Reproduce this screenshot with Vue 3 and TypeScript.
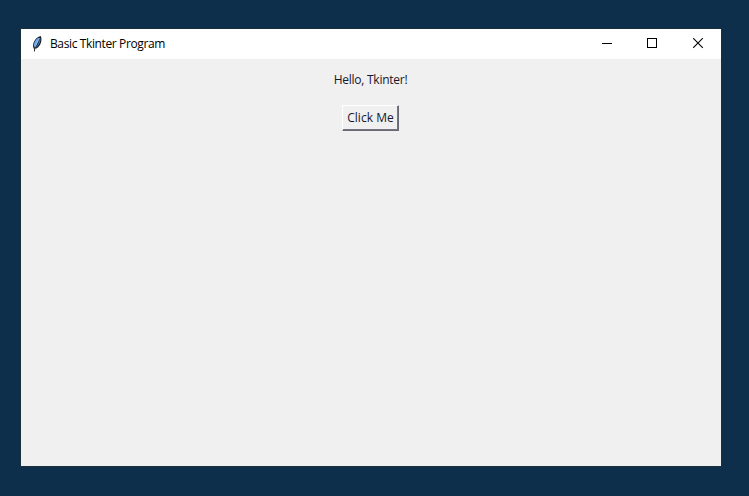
<script setup lang="ts">
import { ref } from 'vue'

const title = 'Basic Tkinter Program'
const message = ref<string>('Hello, Tkinter!')
</script>

<template>
  <main class="desktop">
    <section class="window">
      <header class="titlebar">
        <svg class="feather" width="12" height="18" viewBox="0 0 12 18" aria-hidden="true">
          <path d="M2.6 13.4C.9 9 3.6 2.8 9.8 1C11.4 4.6 9.9 11 5.4 13.6Z" fill="#15191f" />
          <path d="M3 11.4C2.4 8 4.6 3.8 8.2 2.4C8.2 6 6.3 9 3.8 12.4Z" fill="#6aa6ee" />
          <path d="M4.8 12.4C7 10 8.6 6.5 9.2 2.6C10 6 8.6 10 5.4 12.6Z" fill="#4a80c4" />
          <path d="M8.8 3C6.6 6.5 5 9.6 3.8 13" fill="none" stroke="#b5d2f2" stroke-width=".6" />
          <path d="M4 11.6L3.4 16.4" fill="none" stroke="#222" stroke-width="1" />
        </svg>
        <span class="title">{{ title }}</span>
        <nav class="controls">
          <button class="control minimize" aria-label="Minimize">
            <svg width="11" height="11" shape-rendering="crispEdges"><path d="M0 5.5H10" stroke="#000" /></svg>
          </button>
          <button class="control" aria-label="Maximize">
            <svg width="11" height="11" shape-rendering="crispEdges"><rect x=".5" y=".5" width="9" height="9" fill="none" stroke="#000" /></svg>
          </button>
          <button class="control" aria-label="Close">
            <svg width="11" height="11"><path d="M.2 .2L9.8 9.8M9.8 .2L.2 9.8" stroke="#000" stroke-width="1.1" /></svg>
          </button>
        </nav>
      </header>
      <div class="content">
        <div class="label">{{ message }}</div>
        <button class="action"><span>Click Me</span></button>
      </div>
    </section>
  </main>
</template>

<style>
body {
  margin: 0;
}
</style>

<style scoped>
.desktop {
  box-sizing: border-box;
  width: 749px;
  height: 496px;
  padding: 29px 28px 30px 21px;
  background: #0e2f4b;
  font-family: "Open Sans", "Noto Sans", sans-serif;
  font-size: 12px;
}
.window {
  display: flex;
  flex-direction: column;
  width: 700px;
  height: 437px;
  background: #f0f0f0;
  box-shadow: 0 0 0 1px #1b2f3b;
}
.titlebar {
  display: flex;
  align-items: center;
  height: 30px;
  background: #fff;
  color: #000;
}
.feather {
  margin: 0 7px 0 10px;
}
.title {
  line-height: 16px;
  letter-spacing: -0.38px;
  white-space: nowrap;
}
.controls {
  display: flex;
  height: 30px;
  margin-left: auto;
}
.control {
  box-sizing: border-box;
  display: flex;
  align-items: center;
  justify-content: center;
  width: 46px;
  padding: 0 0 1px 1px;
  border: 0;
  background: transparent;
}
.minimize {
  padding-left: 3px;
}
.content {
  display: flex;
  flex: 1;
  flex-direction: column;
  align-items: center;
  padding: 12px 1px 0 0;
  color: #17172b;
}
.label {
  line-height: 18px;
  letter-spacing: -0.25px;
}
.action {
  box-sizing: border-box;
  width: 57px;
  height: 26px;
  margin-top: 16px;
  padding: 0;
  border: 1px solid;
  border-color: #fff #696973 #696973 #fff;
  box-shadow: inset -1px -1px #74747e;
  background: #f0f0f0;
  color: #17172b;
  font: inherit;
  line-height: 22px;
  letter-spacing: 0.05px;
  white-space: nowrap;
}
</style>
